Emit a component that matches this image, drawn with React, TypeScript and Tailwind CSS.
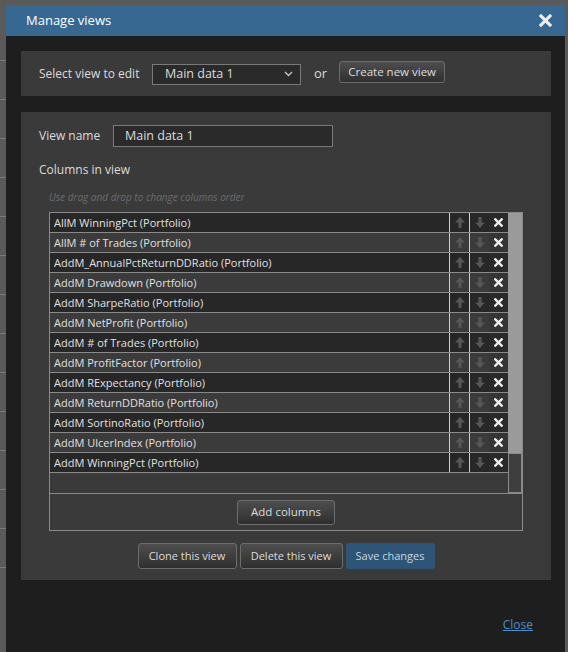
import React from 'react';

const columns = [
  'AllM WinningPct (Portfolio)',
  'AllM # of Trades (Portfolio)',
  'AddM_AnnualPctReturnDDRatio (Portfolio)',
  'AddM Drawdown (Portfolio)',
  'AddM SharpeRatio (Portfolio)',
  'AddM NetProfit (Portfolio)',
  'AddM # of Trades (Portfolio)',
  'AddM ProfitFactor (Portfolio)',
  'AddM RExpectancy (Portfolio)',
  'AddM ReturnDDRatio (Portfolio)',
  'AddM SortinoRatio (Portfolio)',
  'AddM UlcerIndex (Portfolio)',
  'AddM WinningPct (Portfolio)',
];

const font = { fontFamily: '"Open Sans", "Liberation Sans", sans-serif' };

function ArrowUp() {
  return (
    <svg width="10" height="11" viewBox="0 0 10 11">
      <path d="M5 0 L10 5.5 H6.6 V11 H3.4 V5.5 H0 Z" fill="#575757" />
    </svg>
  );
}

function ArrowDown() {
  return (
    <svg width="10" height="11" viewBox="0 0 10 11">
      <path d="M5 11 L10 5.5 H6.6 V0 H3.4 V5.5 H0 Z" fill="#5a5452" />
    </svg>
  );
}

function Cross({ size = 9, w = 2.6 }: { size?: number; w?: number }) {
  return (
    <svg width={size} height={size} viewBox="0 0 10 10">
      <path d="M1.5 1.5 L8.5 8.5 M8.5 1.5 L1.5 8.5" stroke="#eeeeee" strokeWidth={w} strokeLinecap="square" />
    </svg>
  );
}

function Btn({ children, className = '' }: { children: React.ReactNode; className?: string }) {
  return (
    <button
      className={`flex items-center justify-center rounded-[3px] border border-[#6c6c6c] bg-gradient-to-b from-[#4e4e4e] to-[#2f2f2f] text-[#dcdcdc] ${className}`}
    >
      {children}
    </button>
  );
}

export default function App() {
  return (
    <div className="relative w-[568px] h-[652px] overflow-hidden bg-[#5a5a5a]" style={font}>
      {/* page behind the dialog */}
      <div className="absolute left-0 top-0 w-[6px] h-full flex flex-col gap-[38px] pt-[60px]">
        {Array.from({ length: 14 }).map((_, i) => (
          <div key={i} className="h-px w-full bg-[#7a7a7a]" />
        ))}
      </div>

      <div className="absolute left-[6px] top-[5px] w-[559px] h-[660px] bg-[#1e1e1e] flex flex-col">
        {/* Header */}
        <div className="h-[31px] flex items-center justify-between pl-[20px] pr-[13px] bg-[#366892]">
          <span className="text-[13px] text-white">Manage views</span>
          <Cross size={13} w={2.4} />
        </div>

        <div className="flex flex-col pl-[15px] pr-[14px] pt-[15px]">
          {/* Select view */}
          <div className="h-[45px] bg-[#3a3a3a] flex items-center pl-[18px] text-[12px] text-[#dcdcdc]">
            <span className="w-[113px]">Select view to edit</span>
            <div className="w-[149px] h-[21px] border border-[#7a7a7a] bg-[#2a2a2a] flex items-center justify-between pl-[12px] pr-[7px] mt-[1px] text-[12.5px]">
              <span>Main data 1</span>
              <svg width="9" height="6" viewBox="0 0 9 6">
                <path d="M1 1 L4.5 4.5 L8 1" stroke="#c8c8c8" strokeWidth="1.3" fill="none" />
              </svg>
            </div>
            <span className="ml-[13px] text-[13px]">or</span>
            <Btn className="ml-[12px] w-[106px] h-[22px] text-[11.5px] -mt-[3px]">Create new view</Btn>
          </div>

          {/* Edit panel */}
          <div className="mt-[16px] bg-[#3a3a3a] flex flex-col pt-[13px] pb-[11px]">
            <div className="flex items-center pl-[18px] text-[12px] text-[#dcdcdc]">
              <span className="w-[74px]">View name</span>
              <div className="w-[220px] h-[22px] border border-[#7a7a7a] bg-[#2a2a2a] flex items-center pl-[11px] text-[12.5px]">
                Main data 1
              </div>
            </div>

            <div className="pl-[18px] mt-[14px] text-[12px] text-[#dcdcdc] leading-[18px]">Columns in view</div>
            <div className="pl-[28px] mt-[11px] text-[10px] italic text-[#6c6c6c] leading-[14px]">
              Use drag and drop to change columns order
            </div>

            <div className="mx-[28px] mt-[8px] border border-[#8a8a8a] flex flex-col">
              <div className="h-[280px] flex">
                <div className="flex-1 flex flex-col">
                  {columns.map((c, i) => {
                    const dark = i % 2 === 0;
                    return (
                      <div
                        key={c}
                        className={`h-[20px] flex border-b border-[#8a8a8a] ${dark ? 'bg-[#272727]' : 'bg-[#3b3b3b]'}`}
                      >
                        <div className="flex-1 pl-[4px] flex items-center text-[11px] text-[#e0e0e0] leading-none">{c}</div>
                        <div className="w-[20px] border-l border-[#cfcfcf] flex items-center justify-center">
                          <ArrowUp />
                        </div>
                        <div className="w-[20px] border-l border-[#cfcfcf] flex items-center justify-center">
                          <ArrowDown />
                        </div>
                        <div className={`w-[19px] flex items-center justify-center ${dark ? 'bg-[#2a2a2a]' : 'bg-[#353535]'}`}>
                          <Cross />
                        </div>
                      </div>
                    );
                  })}
                </div>
                <div className="w-[14px] flex flex-col">
                  <div className="h-[240px] bg-[#9a9a9a]" />
                  <div className="flex-1 bg-[#3e3e3e] border border-[#8a8a8a]" />
                </div>
              </div>
              <div className="h-[37px] border-t border-[#8a8a8a] flex items-center justify-center">
                <Btn className="w-[98px] h-[25px] text-[11.5px]">Add columns</Btn>
              </div>
            </div>

            <div className="mt-[12px] flex justify-center gap-[3px] text-[11px]">
              <Btn className="w-[99px] h-[26px]">Clone this view</Btn>
              <Btn className="w-[103px] h-[26px]">Delete this view</Btn>
              <button className="w-[89px] h-[26px] rounded-[3px] bg-[#2e5578] text-[#c9d4de] flex items-center justify-center">
                Save changes
              </button>
            </div>
          </div>

          <div className="flex justify-end pr-[18px] mt-[36px]">
            <span className="text-[12px] text-[#4d90cf] underline">Close</span>
          </div>
        </div>
      </div>
    </div>
  );
}
